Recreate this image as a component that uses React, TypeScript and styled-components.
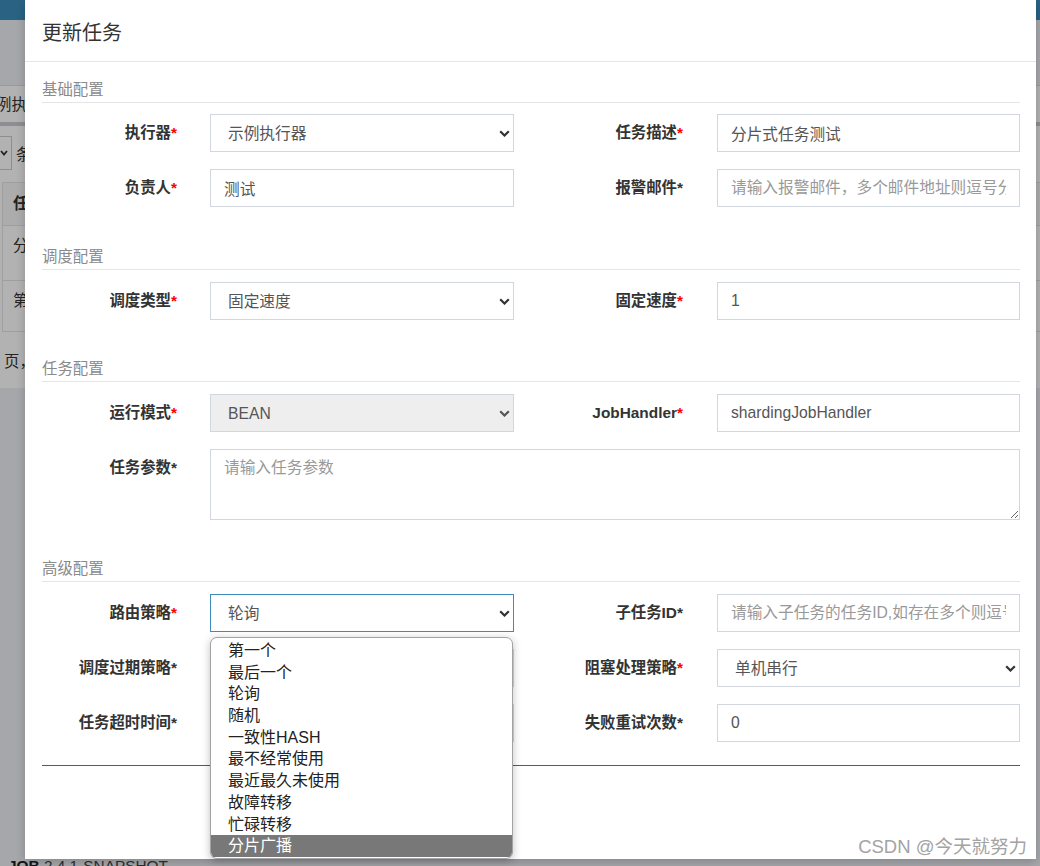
import React from 'react';
import styled, { createGlobalStyle } from 'styled-components';

const FONT = `"Liberation Sans", "Noto Sans CJK SC", sans-serif`;

const Global = createGlobalStyle`
  html, body { margin: 0; padding: 0; }
  body { font-family: ${FONT}; overflow: hidden; background: #ecf0f5; }
  * { box-sizing: border-box; }
`;

/* ---------- page behind the modal ---------- */
const Page = styled.div`
  position: relative;
  width: 1040px;
  height: 866px;
  overflow: hidden;
  display: flex;
  flex-direction: column;
  background: #ecf0f5;
  font-family: ${FONT};
`;
const TopBar = styled.div`
  flex: none;
  height: 20px;
  background: #3c8dbc;
`;
const PageBody = styled.div`
  flex: 1;
  display: flex;
  flex-direction: column;
  padding-top: 65px;
  color: #333;
  font-size: 15.4px;
  white-space: nowrap;
`;
const FilterBar = styled.div`
  height: 37px;
  background: #fff;
  border-top: 1px solid #ddd;
  display: flex;
  align-items: center;
  padding-bottom: 3px;
`;
const Shifted = styled.span<{ $shift: number }>`
  margin-left: ${(p) => p.$shift}px;
`;
const Box = styled.div`
  background: #fff;
  border-top: 4px solid #c9ccd1;
  padding-top: 10px;
`;
const LengthRow = styled.div`
  display: flex;
  align-items: center;
  gap: 4px;
  height: 34px;
`;
const LengthSelect = styled.div`
  width: 14px;
  height: 34px;
  margin-left: -2px;
  border: 1px solid #c9ccd1;
  display: flex;
  align-items: center;
  justify-content: flex-end;
  padding-right: 3px;
  color: #333;
`;
const Table = styled.div`
  margin-top: 12px;
  display: flex;
  flex-direction: column;
`;
const TRow = styled.div<{ $h: number; $head?: boolean }>`
  height: ${(p) => p.$h}px;
  line-height: 20px;
  padding: ${(p) => (p.$head ? 11 : 10)}px 0 0 10px;
  border-top: 1px solid #e4e4e4;
  border-left: 1px solid #e4e4e4;
  margin-left: 2px;
  font-weight: ${(p) => (p.$head ? 700 : 400)};
  background: ${(p) => (p.$head ? '#f7f7f7' : '#fff')};
  &:last-child { border-bottom: 1px solid #e4e4e4; }
`;
const Pager = styled.div`
  height: 56px;
  display: flex;
  align-items: center;
  padding-left: 4px;
  background: #fff;
`;
const Spacer = styled.div`
  flex: 1;
`;
const Footer = styled.div`
  flex: none;
  height: 10px;
  line-height: 20px;
  padding-left: 8px;
  font-size: 15.4px;
  color: #444;
  b { color: #222; }
`;
const Overlay = styled.div`
  position: absolute;
  inset: 0;
  background: rgba(0, 0, 0, 0.3);
`;

/* ---------- modal ---------- */
const Modal = styled.div`
  position: absolute;
  left: 25px;
  top: 0;
  width: 1011px;
  height: 859px;
  background: #fff;
  box-shadow: 0 3px 9px rgba(0, 0, 0, 0.2);
`;
const ModalHeader = styled.div`
  height: 62px;
  padding: 2px 17px 0;
  border-bottom: 1px solid #e5e5e5;
  display: flex;
  align-items: center;
  font-size: 20px;
  color: #333;
`;
const ModalBody = styled.div`
  padding: 0 16px 0 17px;
`;
const Section = styled.section<{ $top: number }>`
  padding-top: ${(p) => p.$top}px;
`;
const SectionTitle = styled.div`
  font-size: 15.4px;
  line-height: 20px;
  color: #8a8a8a;
  padding-bottom: 2px;
  border-bottom: 1px solid #e5e5e5;
`;
const Rows = styled.div<{ $pt?: number }>`
  padding-top: ${(p) => p.$pt ?? 12}px;
  display: grid;
  grid-template-columns: 168px 304px 203px 303px;
  row-gap: 17px;
  align-items: start;
`;
const Label = styled.label<{ $side: 'l' | 'r' }>`
  text-align: right;
  padding-right: ${(p) => (p.$side === 'l' ? 33 : 34)}px;
  font-weight: 700;
  font-size: 15.4px;
  line-height: 38px;
  color: #333;
  white-space: nowrap;
`;
const Star = styled.span<{ $red?: boolean }>`
  color: ${(p) => (p.$red ? '#ff0000' : '#333')};
`;
const fieldBase = `
  width: 100%;
  height: 38px;
  border: 1px solid #d2d6de;
  border-radius: 0;
  font-family: ${FONT};
  font-size: 15.7px;
  color: #555;
  outline: none;
  background: #fff;
  &::placeholder { color: #999; }
`;
const Input = styled.input`
  ${fieldBase}
  padding: 0 13px;
`;
const SelectWrap = styled.div`
  position: relative;
  height: 38px;
`;
const Select = styled.select<{ $focus?: boolean }>`
  ${fieldBase}
  appearance: none;
  padding: 0 24px 0 17px;
  border-color: ${(p) => (p.$focus ? '#3c8dbc' : '#d2d6de')};
  &:disabled {
    background: #eee;
    color: #555;
    opacity: 1;
  }
`;
const Chevron = styled.svg<{ $muted?: boolean }>`
  position: absolute;
  right: 4px;
  top: 16px;
  width: 11px;
  height: 7px;
  color: ${(p) => (p.$muted ? '#555' : '#333')};
  pointer-events: none;
`;
const TextArea = styled.textarea`
  ${fieldBase}
  grid-column: 2 / span 3;
  height: 71px;
  padding: 7px 13px;
  line-height: 22px;
  resize: vertical;
`;
const ListBox = styled.ul`
  position: absolute;
  top: calc(100% + 5px);
  left: 0;
  width: 303px;
  margin: 0;
  padding: 2px 0 1px;
  list-style: none;
  background: #fff;
  border: 1px solid #a3a3a3;
  border-radius: 7px;
  overflow: hidden;
  box-shadow: 0 2px 8px rgba(0, 0, 0, 0.25);
  z-index: 5;
`;
const Option = styled.li<{ $active?: boolean }>`
  height: 21.7px;
  line-height: 21.7px;
  padding-left: 17px;
  font-size: 16px;
  color: ${(p) => (p.$active ? '#fff' : '#222')};
  background: ${(p) => (p.$active ? '#787878' : 'transparent')};
  white-space: nowrap;
`;
const Divider = styled.div`
  margin-top: 23px;
  border-top: 1px solid #5a5a5a;
`;
const Watermark = styled.div`
  position: absolute;
  right: 13px;
  bottom: 8px;
  font-size: 18.5px;
  color: #a3a3a3;
  text-shadow: 0 0 2px #fff, 0 0 1px #fff;
  white-space: nowrap;
`;

const Chev = ({ muted }: { muted?: boolean }) => (
  <Chevron $muted={muted} viewBox="0 0 11 7">
    <path d="M1.2 1.2 L5.5 5.5 L9.8 1.2" fill="none" stroke="currentColor" strokeWidth="2.2" />
  </Chevron>
);

type FieldProps = { label: string; red?: boolean; side: 'l' | 'r' };
const FieldLabel = ({ label, red, side }: FieldProps) => (
  <Label $side={side}>
    {label}
    <Star $red={red}>*</Star>
  </Label>
);

const SelectField = ({
  value,
  disabled,
  focus,
  children,
}: {
  value: string;
  disabled?: boolean;
  focus?: boolean;
  children?: React.ReactNode;
}) => (
  <SelectWrap>
    <Select defaultValue={value} disabled={disabled} $focus={focus}>
      <option value={value}>{value}</option>
    </Select>
    <Chev muted={disabled} />
    {children}
  </SelectWrap>
);

const routeOptions = [
  '第一个',
  '最后一个',
  '轮询',
  '随机',
  '一致性HASH',
  '最不经常使用',
  '最近最久未使用',
  '故障转移',
  '忙碌转移',
  '分片广播',
];

export default function App() {
  return (
    <>
      <Global />
      <Page>
        <TopBar />
        <PageBody>
          <FilterBar>
            <Shifted $shift={-4}>例执</Shifted>
          </FilterBar>
          <Box>
            <LengthRow>
              <LengthSelect>
                <svg width="8" height="6" viewBox="0 0 8 6">
                  <path d="M1 1 L4 4.5 L7 1" fill="none" stroke="currentColor" strokeWidth="1.8" />
                </svg>
              </LengthSelect>
              <span>条</span>
            </LengthRow>
            <Table>
              <TRow $h={43} $head>任</TRow>
              <TRow $h={55}>分</TRow>
              <TRow $h={52}>第</TRow>
            </Table>
            <Pager>页，</Pager>
          </Box>
          <Spacer />
          <Footer>
            <b>JOB</b> 2.4.1-SNAPSHOT
          </Footer>
        </PageBody>
        <Overlay />

        <Modal>
          <ModalHeader>更新任务</ModalHeader>
          <ModalBody>
            <Section $top={18}>
              <SectionTitle>基础配置</SectionTitle>
              <Rows $pt={11}>
                <FieldLabel side="l" label="执行器" red />
                <SelectField value="示例执行器" />
                <FieldLabel side="r" label="任务描述" red />
                <Input defaultValue="分片式任务测试" />

                <FieldLabel side="l" label="负责人" red />
                <Input defaultValue="测试" />
                <FieldLabel side="r" label="报警邮件" />
                <Input placeholder="请输入报警邮件，多个邮件地址则逗号分隔" />
              </Rows>
            </Section>

            <Section $top={40}>
              <SectionTitle>调度配置</SectionTitle>
              <Rows>
                <FieldLabel side="l" label="调度类型" red />
                <SelectField value="固定速度" />
                <FieldLabel side="r" label="固定速度" red />
                <Input defaultValue="1" />
              </Rows>
            </Section>

            <Section $top={39}>
              <SectionTitle>任务配置</SectionTitle>
              <Rows>
                <FieldLabel side="l" label="运行模式" red />
                <SelectField value="BEAN" disabled />
                <FieldLabel side="r" label="JobHandler" red />
                <Input defaultValue="shardingJobHandler" />

                <FieldLabel side="l" label="任务参数" />
                <TextArea placeholder="请输入任务参数" />
              </Rows>
            </Section>

            <Section $top={39}>
              <SectionTitle>高级配置</SectionTitle>
              <Rows>
                <FieldLabel side="l" label="路由策略" red />
                <SelectField value="轮询" focus>
                  <ListBox>
                    {routeOptions.map((o) => (
                      <Option key={o} $active={o === '分片广播'}>
                        {o}
                      </Option>
                    ))}
                  </ListBox>
                </SelectField>
                <FieldLabel side="r" label="子任务ID" />
                <Input placeholder="请输入子任务的任务ID,如存在多个则逗号分隔" />

                <FieldLabel side="l" label="调度过期策略" />
                <SelectField value="忽略" />
                <FieldLabel side="r" label="阻塞处理策略" red />
                <SelectField value="单机串行" />

                <FieldLabel side="l" label="任务超时时间" />
                <Input defaultValue="0" />
                <FieldLabel side="r" label="失败重试次数" />
                <Input defaultValue="0" />
              </Rows>
              <Divider />
            </Section>
          </ModalBody>
        </Modal>
        <Watermark>CSDN @今天就努力</Watermark>
      </Page>
    </>
  );
}
